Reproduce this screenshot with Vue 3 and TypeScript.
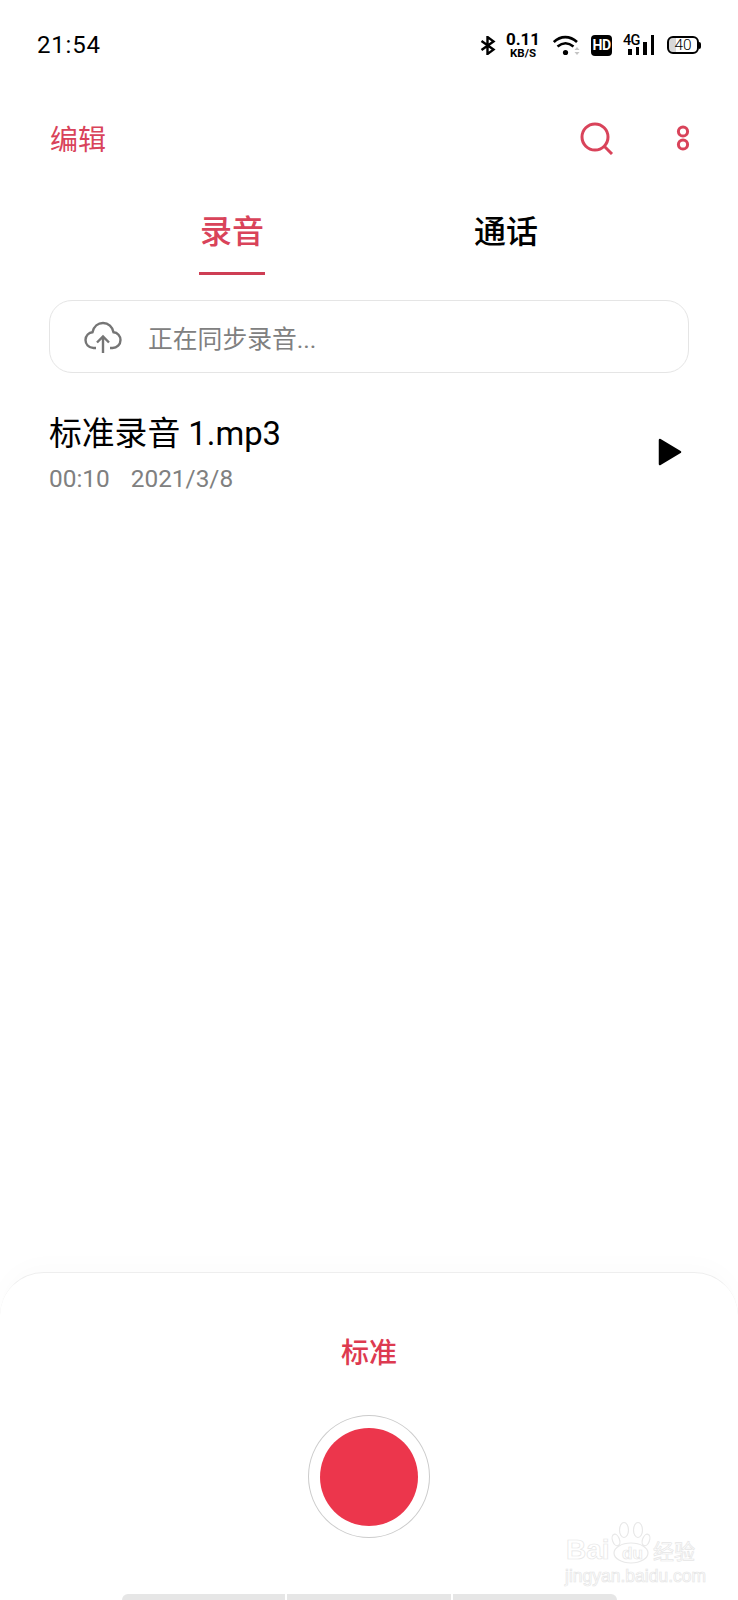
<script setup lang="ts">
const recording = {
  name: '标准录音 1.mp3',
  duration: '00:10',
  date: '2021/3/8',
}
const signalBars = [6, 8, 13, 20]
</script>

<template>
  <div class="page">
    <header class="status-bar">
      <span class="clock">21:54</span>
      <div class="status-icons">
        <svg class="bt" width="16" height="19" viewBox="0 0 16 19">
          <path d="M1.5 5 L13.5 13.6 L7.5 18 V1 L13.5 5.4 L1.5 14" fill="none" stroke="#000" stroke-width="2.4" />
        </svg>
        <div class="speed">
          <span class="speed-num">0.11</span>
          <span class="speed-unit">KB/S</span>
        </div>
        <svg class="wifi" width="27" height="21" viewBox="0 0 27 21">
          <path d="M0.8 7 C7.5 0.5 17 0.5 24 7" fill="none" stroke="#000" stroke-width="2.6" />
          <path d="M4.5 11.5 C10 7 15 7 20.5 11.5" fill="none" stroke="#000" stroke-width="2.6" />
          <circle cx="12.5" cy="17.5" r="2.6" fill="#000" />
          <path d="M21.5 15 L24 12 L26.5 15 Z M21.5 17 L24 20 L26.5 17 Z" fill="#c4c4c4" />
        </svg>
        <span class="hd">HD</span>
        <div class="signal">
          <span class="net">4G</span>
          <div class="bars">
            <i v-for="h in signalBars" :key="h" :style="{ height: h + 'px' }"></i>
          </div>
        </div>
        <div class="battery">
          <span class="battery-box">40</span>
          <i class="battery-cap"></i>
        </div>
      </div>
    </header>

    <nav class="toolbar">
      <span class="edit">编辑</span>
      <div class="tools">
        <svg width="34" height="33" viewBox="0 0 34 33">
          <circle cx="15" cy="15" r="13" fill="none" stroke="#d9435a" stroke-width="3" />
          <path d="M24 24 L32 32" stroke="#d9435a" stroke-width="3" />
        </svg>
        <svg width="14" height="28" viewBox="0 0 14 28">
          <circle cx="7" cy="7.5" r="4.6" fill="none" stroke="#d9435a" stroke-width="3" />
          <circle cx="7" cy="20.5" r="4.6" fill="none" stroke="#d9435a" stroke-width="3" />
        </svg>
      </div>
    </nav>

    <div class="tabs">
      <div class="tab active">录音</div>
      <div class="tab">通话</div>
    </div>

    <div class="sync">
      <svg width="38" height="32" viewBox="0 0 38 32">
        <path d="M12 27 H9.5 C4.5 27 1.5 23 1.5 19 C1.5 14.5 5 11.5 8.5 11.2 C9.8 5.5 14 2 19 2 C24.5 2 28.5 6 29.5 11.2 C33.5 11.5 36.5 15 36.5 19 C36.5 23.5 33 27 28.5 27 H26" fill="none" stroke="#757575" stroke-width="2.4" />
        <path d="M19 32 V16 M13 21.5 L19 15.5 L25 21.5" fill="none" stroke="#757575" stroke-width="2.4" />
      </svg>
      <span>正在同步录音...</span>
    </div>

    <main class="list">
      <div class="row">
        <div class="row-text">
          <div class="row-name">{{ recording.name }}</div>
          <div class="row-meta">
            <span>{{ recording.duration }}</span>
            <span>{{ recording.date }}</span>
          </div>
        </div>
        <svg class="play" width="24" height="28" viewBox="0 0 24 28">
          <path d="M2 2 L22 14 L2 26 Z" fill="#000" stroke="#000" stroke-width="2.5" stroke-linejoin="round" />
        </svg>
      </div>
    </main>

    <footer class="panel">
      <div class="mode">标准</div>
      <button class="rec"><i></i></button>
      <div class="nav-bar">
        <i></i><i></i><i></i>
      </div>
    </footer>

    <div class="watermark">
      <svg class="paw" width="42" height="46" viewBox="0 0 42 46">
        <g fill="#fff" stroke="#e8e8e8" stroke-width="1.2">
          <ellipse cx="6" cy="22" rx="3.5" ry="6" transform="rotate(-20 6 22)" />
          <ellipse cx="14" cy="12" rx="4.5" ry="7.5" />
          <ellipse cx="28" cy="12" rx="4.5" ry="7.5" />
          <ellipse cx="36" cy="22" rx="3.5" ry="6" transform="rotate(20 36 22)" />
          <ellipse cx="21" cy="35" rx="17" ry="10" />
        </g>
      </svg>
      <span class="wm-bai">Bai</span>
      <span class="wm-du">du</span>
      <span class="wm-jy">经验</span>
      <span class="wm-url">jingyan.baidu.com</span>
    </div>
  </div>
</template>

<style scoped>
.page {
  position: relative;
  display: flex;
  flex-direction: column;
  width: 738px;
  height: 1600px;
  overflow: hidden;
  background: #fff;
  color: #000;
  font-family: Roboto, "Noto Sans CJK SC", sans-serif;
}

.status-bar {
  display: flex;
  align-items: center;
  justify-content: space-between;
  height: 90px;
  padding: 0 37px;
  box-sizing: border-box;
}

.clock {
  font-size: 24px;
  letter-spacing: 0.8px;
}

.status-icons {
  display: flex;
  align-items: center;
}

.bt {
  margin-right: 11px;
}

.speed {
  display: flex;
  flex-direction: column;
  align-items: center;
  width: 32px;
  margin-right: 14px;
  font-weight: 700;
}

.speed-num {
  font-size: 17px;
  line-height: 15px;
}

.speed-unit {
  font-size: 11.5px;
  line-height: 12px;
}

.wifi {
  margin-right: 11px;
}

.hd {
  width: 21px;
  height: 21px;
  margin-right: 12px;
  border-radius: 4px;
  background: #000;
  color: #fff;
  font-size: 14px;
  font-weight: 700;
  line-height: 21px;
  text-align: center;
  letter-spacing: -0.5px;
}

.signal {
  position: relative;
  width: 30px;
  height: 20px;
  margin-right: 13px;
}

.net {
  position: absolute;
  top: 0;
  left: -1px;
  font-size: 14.5px;
  font-weight: 500;
  line-height: 12px;
  letter-spacing: -0.8px;
}

.bars {
  position: absolute;
  right: 0;
  bottom: 0;
  display: flex;
  align-items: flex-end;
  gap: 4px;
}

.bars i {
  display: block;
  width: 3.5px;
  background: #000;
}

.battery {
  display: flex;
  align-items: center;
}

.battery-box {
  width: 32px;
  height: 18px;
  box-sizing: border-box;
  border: 2px solid #000;
  border-radius: 6px;
  background: linear-gradient(90deg, #d8d8d8 25%, #fff 25%);
  font-size: 15.5px;
  font-weight: 300;
  line-height: 14px;
  text-align: center;
}

.battery-cap {
  width: 2px;
  height: 7px;
  border-radius: 0 2px 2px 0;
  background: #000;
}

.toolbar {
  display: flex;
  align-items: center;
  justify-content: space-between;
  height: 60px;
  margin-top: 18px;
  padding: 0 48px 0 50px;
}

.edit {
  color: #d9435a;
  font-size: 28px;
}

.tools {
  display: flex;
  align-items: center;
  gap: 62px;
}

.tabs {
  display: flex;
  justify-content: center;
  gap: 208px;
  height: 89px;
  margin-top: 18px;
}

.tab {
  width: 66px;
  height: 89px;
  box-sizing: border-box;
  padding-top: 22px;
  font-size: 32px;
  font-weight: 500;
  line-height: 48px;
  text-align: center;
  white-space: nowrap;
}

.tab.active {
  border-bottom: 3px solid #ce3e54;
  color: #d9435a;
}

.sync {
  display: flex;
  align-items: center;
  gap: 26px;
  height: 73px;
  margin: 25px 49px 0;
  padding-left: 34px;
  box-sizing: border-box;
  border: 1px solid #e5e5e5;
  border-radius: 23px;
  color: #808080;
  font-size: 24.8px;
}

.list {
  flex: 1;
  padding: 0 49px;
}

.row {
  display: flex;
  align-items: center;
  justify-content: space-between;
  margin-top: 37px;
}

.row-name {
  font-size: 32.8px;
  line-height: 48px;
}

.row-meta {
  display: flex;
  gap: 21px;
  margin-top: 2px;
  color: #808080;
  font-size: 24.4px;
  line-height: 38px;
}

.play {
  margin-top: -5px;
  margin-right: 7px;
}

.panel {
  display: flex;
  flex-direction: column;
  align-items: center;
  height: 328px;
  box-sizing: border-box;
  border-top: 1px solid #eeeeee;
  border-radius: 44px 44px 0 0;
  background: #fff;
  box-shadow: 0 -8px 24px rgba(0, 0, 0, 0.015);
}

.mode {
  margin-top: 61px;
  color: #dd3a50;
  font-size: 28px;
  font-weight: 500;
  line-height: 40px;
}

.rec {
  display: flex;
  align-items: center;
  justify-content: center;
  width: 122px;
  height: 123px;
  margin-top: 41px;
  padding: 0;
  border: 1.5px solid #cccccc;
  border-radius: 50%;
  background: #fff;
}

.rec i {
  display: block;
  width: 98px;
  height: 98px;
  border-radius: 50%;
  background: #ec364c;
}

.nav-bar {
  display: flex;
  gap: 2px;
  width: 495px;
  height: 6px;
  margin-top: 56px;
  border-radius: 6px 6px 0 0;
  overflow: hidden;
}

.nav-bar i {
  flex: 1;
  background: #e6e6e6;
}

.watermark {
  position: absolute;
  top: 1518px;
  left: 565px;
  width: 140px;
  height: 68px;
  color: #fff;
  -webkit-text-stroke: 0.7px #e6e6e6;
  font-family: "Liberation Sans", "Noto Sans CJK SC", sans-serif;
  white-space: nowrap;
}

.watermark span {
  position: absolute;
}

.paw {
  position: absolute;
  top: 0;
  left: 45px;
}

.wm-bai {
  top: 18px;
  left: 1px;
  font-size: 28px;
  font-weight: 700;
  line-height: 28px;
}

.wm-du {
  top: 27px;
  left: 57px;
  font-size: 17px;
  font-weight: 700;
  line-height: 17px;
}

.wm-jy {
  top: 23px;
  left: 88px;
  font-size: 21px;
  line-height: 22px;
}

.wm-url {
  top: 49px;
  left: 0;
  font-size: 17.5px;
  line-height: 18px;
}
</style>

<style>
html,
body {
  margin: 0;
  background: #fff;
}
</style>
